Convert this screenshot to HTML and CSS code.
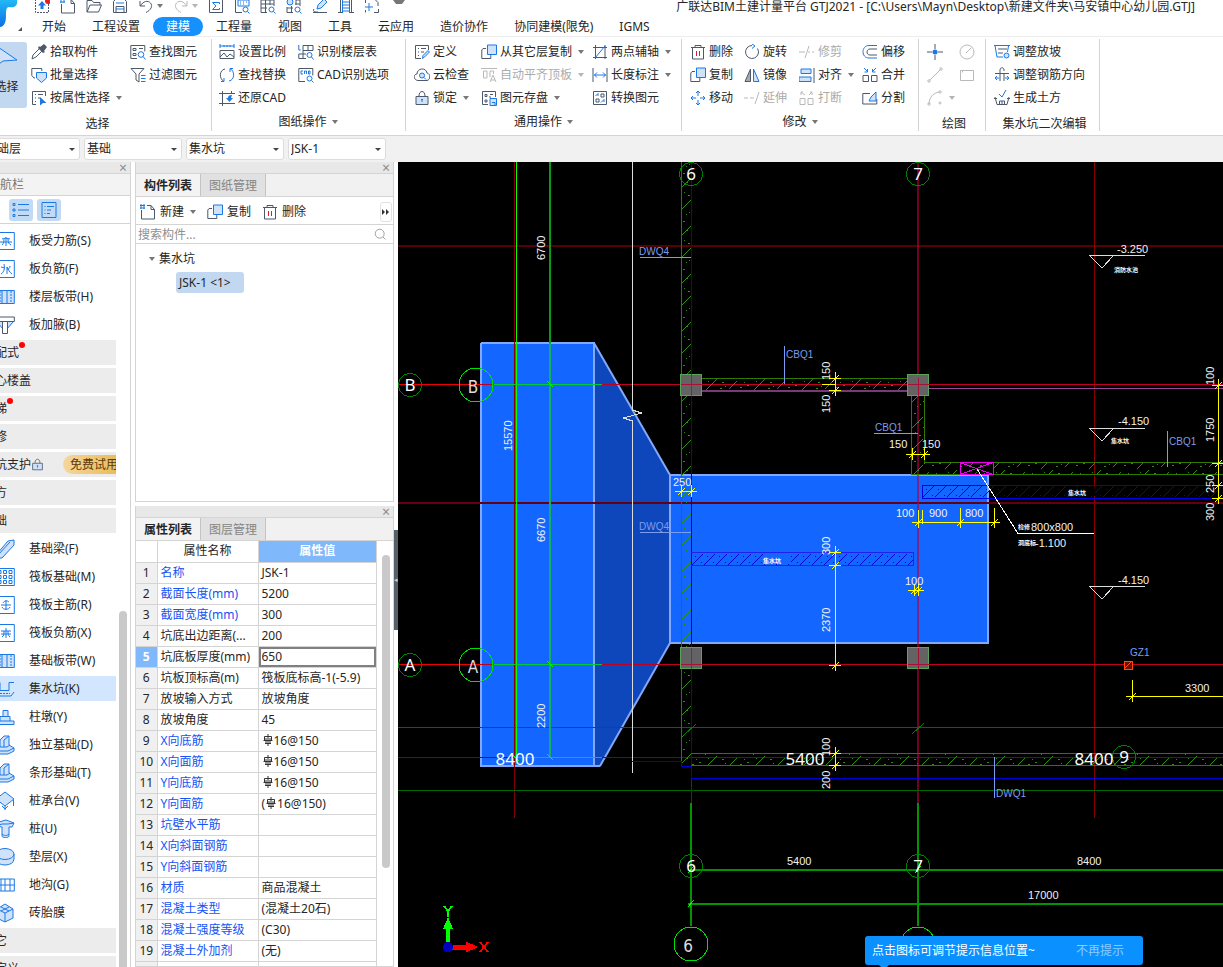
FILE: index.html
```html
<!DOCTYPE html>
<html lang="zh-CN">
<head>
  <meta charset="utf-8">
  <title>广联达BIM土建计量平台 GTJ2021</title>
  <link rel="stylesheet" href="styles.css">
</head>
<body>
  <!-- Icon sprite -->
  <svg class="sprite" aria-hidden="true">
    <symbol id="i-upload" viewBox="0 0 16 16"><path class="k dash" d="M1.500 1v13.500h13V1"/><path class="bf" d="M8 3l4 4.500H9.500V11h-3V7.500H4z"/><circle cx="14" cy="3" r="3" fill="#e81e25"/></symbol>
    <symbol id="i-new" viewBox="0 0 16 16"><path class="k" d="M1.500 6v9h13V5.500l-3.500-4H7M11 1.500v4h3.500"/><path class="b" d="M0 1.500h5M0 4h5M1 0v5M4 0v5"/></symbol>
    <symbol id="i-open" viewBox="0 0 16 16"><path class="k" d="M1 14V2.500h5l1.500 2H14V7M1 14l3-7h11.500l-3 7z"/></symbol>
    <symbol id="i-save" viewBox="0 0 16 16"><path class="k" d="M1.500 3.500l2-2h9l2 2v11h-13zM4 14V8.500h8V14"/><path class="b" d="M4 5h8M4 11h8"/></symbol>
    <symbol id="i-undo" viewBox="0 0 16 16"><path class="k" d="M2 3v5h5M2.500 8C5 3 10 2 12.500 5s.5 7-4.500 9.500"/></symbol>
    <symbol id="i-redo" viewBox="0 0 16 16"><path class="k" d="M14 3v5H9M13.500 8C11 3 6 2 3.500 5s-.5 7 4.500 9.500"/></symbol>
    <symbol id="i-sum" viewBox="0 0 16 16"><path class="k" d="M1.500 1.500h13v13h-13z"/><path class="b" d="M11.500 6V4.500h-7L8 8l-3.500 3.500h7V10"/></symbol>
    <symbol id="i-ruler" viewBox="0 0 16 16"><path class="k" d="M1.500 2v12.500H8"/><path class="b" d="M4 2h11v6H4zM6 4h1M9 4h1M12 4h1M6 6h1M9 6h1"/><circle class="b" cx="11.500" cy="11.500" r="2.500"/><path class="b" d="M13.500 13.500l2 2"/></symbol>
    <symbol id="i-gridfind" viewBox="0 0 16 16"><path class="k" d="M1 2h13v6M1 2v12.500h6M1 6h13M1 10h6M5.500 2v12.500M10 2v5"/><circle class="b" cx="11.500" cy="11.500" r="2.500"/><path class="b" d="M13.500 13.500l2 2"/></symbol>
    <symbol id="i-eyefind" viewBox="0 0 16 16"><path class="k" d="M10 2h4v6M1 9v5.500h6M9 6h5M1 10h6M5.500 8v6.500M10 2v5"/><circle class="b f" cx="4" cy="4" r="3"/><circle class="b" cx="11.500" cy="11.500" r="2.500"/><path class="b" d="M13.500 13.500l2 2"/></symbol>
    <symbol id="i-pen" viewBox="0 0 16 16"><path class="k" d="M1 14.500h14M2 11c-2 3 2 3 4 3"/><path class="b f" d="M5 11l1-4 6-6 3 3-6 6z"/></symbol>
    <symbol id="i-film" viewBox="0 0 16 16"><path class="k" d="M2.500 1v14M13.500 1v14M0 14.500h5M11 14.500h5"/><path class="b" d="M4.500 4h7M4.500 7h7M4.500 10h7M4.500 13h7M4.500 1v14M11.500 1v14"/></symbol>
    <symbol id="i-frame" viewBox="0 0 16 16"><path class="k" d="M5 1.500h6l3 3V8M1.500 5V1.500M1.500 14.500V12M10 14.500h4.500V11"/><path class="b" d="M1 9h8M5 5v8"/></symbol>

    <symbol id="i-cursor" viewBox="0 0 28 28"><path class="b f" d="M2 1v22l8-6 14-1z"/></symbol>
    <symbol id="i-dropper" viewBox="0 0 16 16"><path d="M9 3l4-3 3 3-3 4 1 1-2 1-5-5 1-2z" fill="#4d586a"/><path class="k" d="M8 5L2 11l-1 4 4-2 6-6"/></symbol>
    <symbol id="i-batch" viewBox="0 0 16 16"><path class="k" d="M4 11H3L.8 8.500v-7h10V4"/><path class="b f" d="M5.500 5.500h10V11l-5 4.500-5-4.500z"/></symbol>
    <symbol id="i-attr" viewBox="0 0 16 16"><path class="k" d="M5 14.500H1.500v-13h13V6M4 4.500h1M4 8h1M4 11.500h1M7 4.500h5M7 8h2"/><path class="bf" d="M9 7l6.500 6H12l-3 2.500z"/></symbol>
    <symbol id="i-find" viewBox="0 0 16 16"><path class="k" d="M7 14.500H.8v-13h14v6M3 4.500h3v2H3zM3 9.500h3v2H3zM9 4.500h4"/><circle class="b" cx="11" cy="10.500" r="2.800"/><path class="b" d="M13 12.500l2.500 3"/></symbol>
    <symbol id="i-filter" viewBox="0 0 16 16"><path class="k" d="M1 1.500h13L9 7v8l-3-2V7z"/><path class="b" d="M11 8.500h4.500M11 11.500h4.500M11 14.500h4.500"/></symbol>
    <symbol id="i-scale" viewBox="0 0 16 16"><path class="b" d="M.8 2h14.500M1 0v4M15 0v4M5 1v2M8 1v2M11 1v2"/><path class="k" d="M1 6.500h14v8H1zM1 13l4-4 3 4 3-3 4 3"/></symbol>
    <symbol id="i-replace" viewBox="0 0 16 16"><path class="k" d="M6 2C0 3 0 12 5 14.500"/><path class="b" d="M10 14c6-1 6-10 1-12.500M11 5V1.500h3M5 11v3.500H2"/></symbol>
    <symbol id="i-restore" viewBox="0 0 16 16"><path class="k" d="M0 3.500h16M0 13.500h16M3.500 1v15M12.500 1v3"/><path class="bf" d="M13 5c-3 0-4 1-4 3H7l3.500 4L14 8h-2z"/></symbol>
    <symbol id="i-floor" viewBox="0 0 16 16"><path class="b" d="M.8 1v5M.8 6h2"/><path class="k" d="M5 1.500h10v5H5zM10 1.500v5M5 6.500v8M.8 10H8M.8 14.500H8M.8 10v4.500"/><circle class="b" cx="11.500" cy="11" r="2.500"/><path class="b" d="M13.500 13l2 2.500"/></symbol>
    <symbol id="i-cad" viewBox="0 0 16 16"><path class="k" d="M7 14.500H.8v-13h14v7"/><path class="b" d="M5 4H3v3h2M6.500 7V4h2v3M10.500 4h1.500v3h-1.500z"/><circle class="b" cx="11.500" cy="11.500" r="2.500"/><path class="b" d="M13.500 13.500l2 2"/></symbol>

    <symbol id="i-define" viewBox="0 0 16 16"><path class="k" d="M7 14.500H1.500v-13h13V6M4 4.500h1M4 8h1M4 11.500h1M7 4.500h5M7 8h3"/><path class="b f" d="M8.500 14.500l.5-3 5-5 1.500 1.500-5 5z"/></symbol>
    <symbol id="i-cloud" viewBox="0 0 16 16"><path class="k" d="M4 13.500C-1 13-.5 7 3 7c0-6 9-7 10-1 4 1 3.500 7 0 7.500z"/><circle class="b f" cx="8" cy="8.500" r="2.500"/><path class="b" d="M10 10.500l2 2"/></symbol>
    <symbol id="i-lock" viewBox="0 0 16 16"><path class="k f" d="M2 6.500h12v8H2z"/><path class="k" d="M5 6C5 0 11 0 11 6"/><path class="b" d="M8 9v3M7 10l1-1 1 1"/></symbol>
    <symbol id="i-copy" viewBox="0 0 16 16"><path class="k" d="M5 4.500H2L.8 6v8.500h9V11"/><path class="b f" d="M6.500 1h9v9.500h-9z"/></symbol>
    <symbol id="i-align-top" viewBox="0 0 16 16"><path class="k" d="M0 1.500h16M2.500 4h3.500v7H2.500zM9 10V4h3.500v3M9 15l3-7 3 7M10 13h4"/></symbol>
    <symbol id="i-disk" viewBox="0 0 16 16"><path class="k" d="M7 14.500H1.500v-13h13V7M4 4.500h2v2H4zM4 10h2v2H4zM9 4.500h3M8 7h2"/><path class="b f" d="M9 8.500h6.500v7H9zM11 12.500h3v3"/></symbol>
    <symbol id="i-axis" viewBox="0 0 16 16"><path class="k" d="M1 3.500h14M1 13.500h14M3.500 1v14M13 1v14"/><path class="b" d="M3 14L13 2"/></symbol>
    <symbol id="i-length" viewBox="0 0 16 16"><path class="k" d="M1 1v14M15 1v14"/><path class="b" d="M2 8h12M5 5.500L2.500 8 5 10.500M11 5.500L13.500 8 11 10.500"/></symbol>
    <symbol id="i-convert" viewBox="0 0 16 16"><path class="k" d="M1.500 1.500h13v13h-13zM9 4h3v3H9zM4 9h3v3H4z"/><path class="b" d="M3.500 6L6 3.500M6 6V3.500M9 12.500L12 9.500M12 12V9.500"/></symbol>

    <symbol id="i-delete" viewBox="0 0 16 16"><path class="k" d="M1 3.500h14M5 3.500v-2h6v2M2.500 3.500v11.500h11V3.500"/><path d="M6.500 7v5M9.500 7v5" stroke="#d81e2c"/></symbol>
    <symbol id="i-rotate" viewBox="0 0 16 16"><path class="k" d="M8 1.500a6.500 6.500 0 1 0 5.500 3"/><path class="b" d="M8 0l3 2-3 2.500"/></symbol>
    <symbol id="i-mirror" viewBox="0 0 16 16"><path d="M6.500 2v12.500H1z" stroke="#4d586a" fill="#aaa"/><path class="b f" d="M9.500 2v12.500H15z"/></symbol>
    <symbol id="i-move" viewBox="0 0 16 16"><path class="b" d="M8 1v5M8 10v5M1 8h5M10 8h5M6 3l2-2 2 2M6 13l2 2 2-2M3 6L1 8l2 2M13 6l2 2-2 2"/></symbol>
    <symbol id="i-trim" viewBox="0 0 16 16"><path class="k" d="M0 8h6M9 8h2M13 8h2M10 2L6 14"/></symbol>
    <symbol id="i-extend" viewBox="0 0 16 16"><path class="k" d="M0 8h4M6 8h4M15 2l-4 12"/></symbol>
    <symbol id="i-align" viewBox="0 0 16 16"><path class="b f" d="M2 2h10v4.500H2zM0 10h12v4.500H0z"/><path class="k" d="M15 1v15"/></symbol>
    <symbol id="i-break" viewBox="0 0 16 16"><path class="k" d="M1 8.500h5v6H1zM9 8.500h5v6H9zM6 5L2 2M2 5V2h2M10 5l3-3M13 5V2h-2"/></symbol>
    <symbol id="i-offset" viewBox="0 0 16 16"><path class="b" d="M15 1.500H7c-8 0-8 12.500 0 12.500h8"/><path class="k" d="M15 5H8c-4 0-4 6 0 6h7"/></symbol>
    <symbol id="i-merge" viewBox="0 0 16 16"><path class="k" d="M1 8.500h5.500v6H1zM9.500 8.500H15v6H9.500z"/><path class="b" d="M2 1l3.500 3.500M5.500 2v3h-3M14 1l-3.500 3.500M10.500 2v3h3"/></symbol>
    <symbol id="i-split" viewBox="0 0 16 16"><path class="k" d="M8 3.500H.8v10.500h14V9"/><path class="b f" d="M7 11l2-4 5-5v9z"/></symbol>
    <symbol id="i-point" viewBox="0 0 16 16"><path class="k" d="M8 0v5M8 11v5M0 8h5M11 8h5"/><circle class="bf" cx="8" cy="8" r="2.500"/></symbol>
    <symbol id="i-circle" viewBox="0 0 16 16"><circle class="k" cx="8" cy="8" r="7"/><path class="k" d="M7 9l5-5"/></symbol>
    <symbol id="i-line" viewBox="0 0 16 16"><path class="k" d="M3 13L13 3"/><circle class="k" cx="2" cy="14" r="1.200"/><circle class="k" cx="14" cy="2" r="1.200"/></symbol>
    <symbol id="i-rect" viewBox="0 0 16 16"><path class="k" d="M1.500 3.500h13v10h-13zM1.500 3.500h2v2"/></symbol>
    <symbol id="i-arc" viewBox="0 0 16 16"><path class="k" d="M2 14C2 8 6 3 12 2"/><circle class="k" cx="2" cy="14" r="1.200"/><circle class="k" cx="13" cy="2" r="1.200"/><circle class="k" cx="13" cy="13" r="1"/></symbol>
    <symbol id="i-slope" viewBox="0 0 16 16"><path class="b" d="M0 1.500h16M1 1.500L3 13h6M14.500 2l-1 6"/><path class="k" d="M4 5h9M4 9h5"/><circle class="b f" cx="12.500" cy="11.500" r="2.500"/></symbol>
    <symbol id="i-rebar-dir" viewBox="0 0 16 16"><path class="k" d="M6 14V3c0-3 4-3 4 0v1M10 7v7M1 6.500h14"/><path class="b" d="M1 11h4M11 11h4M3 9l-2 2 2 2M13 9l2 2-2 2"/></symbol>
    <symbol id="i-earth" viewBox="0 0 16 16"><path class="k" d="M1 7l2 7.500h10L15 7M0 8.500h3M13 8.500h3M5.500 14v-3h5v3M8 11v3"/><path class="b" d="M5 4l3 3 4-7"/></symbol>
    <symbol id="i-search" viewBox="0 0 16 16"><circle cx="7" cy="7" r="5.500" stroke="#8c8c8c"/><path d="M11 11l3 3" stroke="#8c8c8c"/></symbol>

    <symbol id="i-list" viewBox="0 0 18 18"><path class="b" d="M6 3.500h11M6 9h11M6 14.500h11M1 2.500h2v2H1zM1 8h2v2H1zM1 13.500h2v2H1z"/></symbol>
    <symbol id="i-card" viewBox="0 0 18 18"><path class="b" d="M2 1.500h14v15H2zM4.500 5.500h1M7 5.500h7M4.500 9h1M7 9h4M4.500 12.500h1M7 12.500h3"/></symbol>

    <symbol id="n-bar1" viewBox="0 0 20 20"><path class="b" d="M.8 1.500h18.500v17H.8zM5 11h12M7 14c1-1 2-2 2-6M11 6v9M7 8c1-1 6-1 8 0M13 8c0 4 1 5 3 6"/></symbol>
    <symbol id="n-bar2" viewBox="0 0 20 20"><path class="b" d="M.8 1.500h18.500v17H.8zM6 15c3-2 4-5 3-10M6 8l4 1M12 15V8c1 2 3 6 5 7M12 10c2 0 3-1 3-3"/></symbol>
    <symbol id="n-strip" viewBox="0 0 20 20"><path class="b f" d="M.8 3.500h18.500v13H.8z"/><path class="b" d="M7 4v12M12 4v12"/><path class="b dash" d="M5 4v12M16 4v12"/></symbol>
    <symbol id="n-hunch" viewBox="0 0 20 20"><path class="b f" d="M2 7l6 7V7M18 7l-6 7V7"/><path class="k" d="M.8 2h18.500v4.500H.8z"/><path d="M7.500 7v11.500h5V7" fill="#fff" stroke="#4d586a"/></symbol>
    <symbol id="n-beam" viewBox="0 0 20 20"><path class="b f" d="M1 16L13 2l6-1v5L7 19H1z"/><path class="b" d="M4 15L15 3"/></symbol>
    <symbol id="n-raft" viewBox="0 0 20 20"><path class="b" d="M.8 1.500h18.500v17H.8zM3 3.500h3v3H3zM8.500 3.500h3v3h-3zM14 3.500h3v3h-3zM3 8.500h3v3H3zM8.500 8.500h3v3h-3zM14 8.500h3v3h-3zM3 13.500h3v3H3zM8.500 13.500h3v3h-3zM14 13.500h3v3h-3z"/></symbol>
    <symbol id="n-raftbar" viewBox="0 0 20 20"><path class="b" d="M.8 1.500h18.500v17H.8zM6 10h10M11 5v10M7 12c1 3 7 3 8 0M8 8c1-2 4-3 6-1"/></symbol>
    <symbol id="n-raftneg" viewBox="0 0 20 20"><path class="b" d="M.8 1.500h18.500v17H.8zM6 8h10M6 11h10M11 5v10M7 14c2-1 2-3 2-6M15 14c-2-2-2-3-2-6"/></symbol>
    <symbol id="n-pit" viewBox="0 0 20 20"><path class="b" d="M1 11.500h13V3.500h5M19 13l-3 4H1"/><path class="b dash" d="M2 14.500h13"/><path class="b" d="M1 3.500h4v8"/></symbol>
    <symbol id="n-pier" viewBox="0 0 20 20"><path class="b f" d="M1 14h18v3.500H1zM5 14V9.500h10V14M8 9.500v-6h5v6"/></symbol>
    <symbol id="n-iso" viewBox="0 0 20 20"><path class="b f" d="M1 13l4-1V5l4-4h5v9l5 3v3l-6 3H1z"/><path class="b" d="M1 16h12l6-3M9 5v7M5 12h7l3-2M9 5l5-4"/></symbol>
    <symbol id="n-cap" viewBox="0 0 20 20"><path class="b f" d="M1 8l9-7 9 7-9 7z"/><path class="b" d="M10 15v4M18.500 9v6M1.500 9v6M10 18l-3-3M10 18l3-3"/></symbol>
    <symbol id="n-pile" viewBox="0 0 20 20"><path class="b f" d="M1 7l3-4 7-2 8 3-2 4H14v9c0 2-7 2-7 0V8z"/><path class="b" d="M1 7l6-2 6 0 6-1M7 15c2 2 5 2 7 0"/></symbol>
    <symbol id="n-cushion" viewBox="0 0 20 20"><path class="b f" d="M1 7v5c0 8 18 8 18 0V7"/><ellipse class="b f" cx="10" cy="7" rx="9" ry="5.500"/></symbol>
    <symbol id="n-ditch" viewBox="0 0 20 20"><path class="b" d="M.8 4h18.500v12H.8zM.8 10h18.500M6 4v12M10 4v12M15 4v12"/></symbol>
    <symbol id="n-brick" viewBox="0 0 20 20"><path class="b f" d="M2 6l8-5 8 5v9l-8 4-8-4z"/><path class="b" d="M2 6l8 4 8-4M10 10v9M6 4l8 4M14 4L6 8"/></symbol>
    <symbol id="i-rebar" viewBox="0 0 12 12"><path d="M6 0v12M1.500 6.500h9M3 9.500h6M6 2.500H2.500v4M6 2.500h3.500v4M4 4v5M8 4v5" stroke="#333"/></symbol>
  </svg>

  <div class="app">
    <header class="top">
      <div class="logo">
        <svg viewBox="0 0 53 41">
          <defs><linearGradient id="lg" x1="0" y1="0" x2="0" y2="1"><stop offset="0" stop-color="#22b8f5"/><stop offset="1" stop-color="#0a6fe8"/></linearGradient></defs>
          <path d="M8 4h33c1 6-3 8-8 7-3 0-3 4-3 9 0 8-3 12-9 11-5-1-5-12-3-20H8z" fill="url(#lg)"/>
          <path d="M46 31v4h-4z" fill="#555"/>
        </svg>
      </div>
      <div class="top-rows">
        <div class="titlebar">
          <div class="quick">
            <button aria-label="上传"><svg class="ico"><use href="#i-upload"/></svg></button>
            <button aria-label="新建"><svg class="ico"><use href="#i-new"/></svg></button>
            <button aria-label="打开"><svg class="ico"><use href="#i-open"/></svg></button>
            <button aria-label="保存"><svg class="ico"><use href="#i-save"/></svg></button>
            <button aria-label="撤销"><svg class="ico"><use href="#i-undo"/></svg><i class="caret"></i></button>
            <button aria-label="恢复" class="off"><svg class="ico"><use href="#i-redo"/></svg><i class="caret"></i></button>
            <button aria-label="汇总计算"><svg class="ico"><use href="#i-sum"/></svg></button>
            <button aria-label="查看工程量"><svg class="ico"><use href="#i-ruler"/></svg></button>
            <button aria-label="查看计算式"><svg class="ico"><use href="#i-gridfind"/></svg></button>
            <button aria-label="查看三维"><svg class="ico"><use href="#i-eyefind"/></svg></button>
            <button aria-label="编辑"><svg class="ico"><use href="#i-pen"/></svg></button>
            <button aria-label="楼层"><svg class="ico"><use href="#i-film"/></svg></button>
            <button aria-label="全屏"><svg class="ico"><use href="#i-frame"/></svg></button>
            <button aria-label="更多"><i class="caret bar"></i></button>
          </div>
          <div class="title">广联达BIM土建计量平台 GTJ2021 - [C:\Users\Mayn\Desktop\新建文件夹\马安镇中心幼儿园.GTJ]</div>
        </div>
        <nav class="tabs">
          <button>开始</button><button>工程设置</button><button class="active">建模</button><button>工程量</button><button>视图</button><button>工具</button><button>云应用</button><button>造价协作</button><button>协同建模(限免)</button><button>IGMS</button>
        </nav>
      </div>
    </header>

    <div class="ribbon">
      <section class="group g-select">
        <div class="tools">
          <button class="big"><svg><use href="#i-cursor"/></svg>选择</button>
          <div class="cols">
            <button><svg class="ico"><use href="#i-dropper"/></svg>拾取构件</button>
            <button><svg class="ico"><use href="#i-find"/></svg>查找图元</button>
            <button><svg class="ico"><use href="#i-batch"/></svg>批量选择</button>
            <button><svg class="ico"><use href="#i-filter"/></svg>过滤图元</button>
            <button><svg class="ico"><use href="#i-attr"/></svg>按属性选择<i class="caret"></i></button>
          </div>
        </div>
        <div class="group-name plain">选择</div>
      </section>
      <section class="group g-paper">
        <div class="cols">
          <button><svg class="ico"><use href="#i-scale"/></svg>设置比例</button>
          <button><svg class="ico"><use href="#i-floor"/></svg>识别楼层表</button>
          <button><svg class="ico"><use href="#i-replace"/></svg>查找替换</button>
          <button><svg class="ico"><use href="#i-cad"/></svg>CAD识别选项</button>
          <button><svg class="ico"><use href="#i-restore"/></svg>还原CAD</button>
        </div>
        <div class="group-name">图纸操作<i class="caret"></i></div>
      </section>
      <section class="group g-common">
        <div class="cols">
          <button><svg class="ico"><use href="#i-define"/></svg>定义</button>
          <button><svg class="ico"><use href="#i-copy"/></svg>从其它层复制<i class="caret"></i></button>
          <button><svg class="ico"><use href="#i-axis"/></svg>两点辅轴<i class="caret"></i></button>
          <button><svg class="ico"><use href="#i-cloud"/></svg>云检查</button>
          <button class="off"><svg class="ico"><use href="#i-align-top"/></svg>自动平齐顶板<i class="caret"></i></button>
          <button><svg class="ico"><use href="#i-length"/></svg>长度标注<i class="caret"></i></button>
          <button><svg class="ico"><use href="#i-lock"/></svg>锁定<i class="caret"></i></button>
          <button><svg class="ico"><use href="#i-disk"/></svg>图元存盘<i class="caret"></i></button>
          <button><svg class="ico"><use href="#i-convert"/></svg>转换图元</button>
        </div>
        <div class="group-name">通用操作<i class="caret"></i></div>
      </section>
      <section class="group g-modify">
        <div class="cols">
          <button><svg class="ico"><use href="#i-delete"/></svg>删除</button>
          <button><svg class="ico"><use href="#i-rotate"/></svg>旋转</button>
          <button class="off"><svg class="ico"><use href="#i-trim"/></svg>修剪</button>
          <button><svg class="ico"><use href="#i-offset"/></svg>偏移</button>
          <button><svg class="ico"><use href="#i-copy"/></svg>复制</button>
          <button><svg class="ico"><use href="#i-mirror"/></svg>镜像</button>
          <button><svg class="ico"><use href="#i-align"/></svg>对齐<i class="caret"></i></button>
          <button><svg class="ico"><use href="#i-merge"/></svg>合并</button>
          <button><svg class="ico"><use href="#i-move"/></svg>移动</button>
          <button class="off"><svg class="ico"><use href="#i-extend"/></svg>延伸</button>
          <button class="off"><svg class="ico"><use href="#i-break"/></svg>打断</button>
          <button><svg class="ico"><use href="#i-split"/></svg>分割</button>
        </div>
        <div class="group-name">修改<i class="caret"></i></div>
      </section>
      <section class="group g-draw">
        <div class="cols">
          <button aria-label="点"><svg class="ico"><use href="#i-point"/></svg></button>
          <button aria-label="圆" class="off"><svg class="ico"><use href="#i-circle"/></svg></button>
          <button aria-label="直线" class="off"><svg class="ico"><use href="#i-line"/></svg></button>
          <button aria-label="矩形" class="off"><svg class="ico"><use href="#i-rect"/></svg></button>
          <button aria-label="弧线" class="off"><svg class="ico"><use href="#i-arc"/></svg><i class="caret"></i></button>
        </div>
        <div class="group-name plain">绘图</div>
      </section>
      <section class="group g-pit">
        <div class="cols">
          <button><svg class="ico"><use href="#i-slope"/></svg>调整放坡</button>
          <button><svg class="ico"><use href="#i-rebar-dir"/></svg>调整钢筋方向</button>
          <button><svg class="ico"><use href="#i-earth"/></svg>生成土方</button>
        </div>
        <div class="group-name plain">集水坑二次编辑</div>
      </section>
    </div>

    <div class="filters">
      <label class="filter"><select aria-label="楼层"><option>基础层</option></select></label>
      <label class="filter"><select aria-label="构件分类"><option>基础</option></select></label>
      <label class="filter"><select aria-label="构件类型"><option>集水坑</option></select></label>
      <label class="filter"><select aria-label="构件名称"><option>JSK-1</option></select></label>
    </div>

    <main class="work">
      <aside class="nav">
        <div class="grip"><button aria-label="关闭导航栏">×</button></div>
        <div class="nav-title">导航栏</div>
        <div class="nav-mode">
          <button aria-label="列表"><svg><use href="#i-list"/></svg></button>
          <button aria-label="卡片"><svg><use href="#i-card"/></svg></button>
        </div>
        <div class="nav-body">
          <ul class="nav-list">
            <li><svg><use href="#n-bar1"/></svg>板受力筋(S)</li>
            <li><svg><use href="#n-bar2"/></svg>板负筋(F)</li>
            <li><svg><use href="#n-strip"/></svg>楼层板带(H)</li>
            <li><svg><use href="#n-hunch"/></svg>板加腋(B)</li>
            <li class="cat"><span class="dot">装配式</span></li>
            <li class="cat">空心楼盖</li>
            <li class="cat"><span class="dot">楼梯</span></li>
            <li class="cat">装修</li>
            <li class="cat">基坑支护<svg class="mini"><use href="#i-lock"/></svg><span class="trial">免费试用</span></li>
            <li class="cat">土方</li>
            <li class="cat">基础</li>
            <li><svg><use href="#n-beam"/></svg>基础梁(F)</li>
            <li><svg><use href="#n-raft"/></svg>筏板基础(M)</li>
            <li><svg><use href="#n-raftbar"/></svg>筏板主筋(R)</li>
            <li><svg><use href="#n-raftneg"/></svg>筏板负筋(X)</li>
            <li><svg><use href="#n-strip"/></svg>基础板带(W)</li>
            <li class="current"><svg><use href="#n-pit"/></svg>集水坑(K)</li>
            <li><svg><use href="#n-pier"/></svg>柱墩(Y)</li>
            <li><svg><use href="#n-iso"/></svg>独立基础(D)</li>
            <li><svg><use href="#n-iso"/></svg>条形基础(T)</li>
            <li><svg><use href="#n-cap"/></svg>桩承台(V)</li>
            <li><svg><use href="#n-pile"/></svg>桩(U)</li>
            <li><svg><use href="#n-cushion"/></svg>垫层(X)</li>
            <li><svg><use href="#n-ditch"/></svg>地沟(G)</li>
            <li><svg><use href="#n-brick"/></svg>砖胎膜</li>
            <li class="cat">其它</li>
            <li class="cat">自定义</li>
          </ul>
          <div class="scroll"><div class="thumb"></div></div>
        </div>
      </aside>

      <div class="docks">
        <section class="dock members">
          <div class="grip"><button aria-label="关闭构件列表">×</button></div>
          <div class="dock-tabs"><button class="active">构件列表</button><button>图纸管理</button></div>
          <div class="dock-tools">
            <button><svg class="ico"><use href="#i-new"/></svg>新建<i class="caret"></i></button>
            <button><svg class="ico"><use href="#i-copy"/></svg>复制</button>
            <button><svg class="ico"><use href="#i-delete"/></svg>删除</button>
            <button class="more" aria-label="更多"><svg viewBox="0 0 8 6"><path d="M0 0l3 3-3 3zM4 0l3 3-3 3z" fill="#333"/></svg></button>
          </div>
          <div class="search"><input type="text" placeholder="搜索构件..." aria-label="搜索构件"><svg><use href="#i-search"/></svg></div>
          <div class="tree">
            <div class="tree-root"><i class="caret"></i>集水坑</div>
            <div class="tree-leaf">JSK-1 &lt;1&gt;</div>
          </div>
        </section>

        <section class="dock props">
          <div class="grip"><button aria-label="关闭属性列表">×</button></div>
          <div class="dock-tabs"><button class="active">属性列表</button><button>图层管理</button></div>
          <div class="prop-body">
            <table>
              <thead><tr><th class="no"></th><th class="name">属性名称</th><th class="value">属性值</th></tr></thead>
              <tbody>
                <tr><td>1</td><td class="link">名称</td><td>JSK-1</td></tr>
                <tr><td>2</td><td class="link">截面长度(mm)</td><td>5200</td></tr>
                <tr><td>3</td><td class="link">截面宽度(mm)</td><td>300</td></tr>
                <tr><td>4</td><td>坑底出边距离(...</td><td>200</td></tr>
                <tr class="editing"><td>5</td><td>坑底板厚度(mm)</td><td><input type="text" value="650" aria-label="坑底板厚度(mm)"></td></tr>
                <tr><td>6</td><td>坑板顶标高(m)</td><td>筏板底标高-1(-5.9)</td></tr>
                <tr><td>7</td><td>放坡输入方式</td><td>放坡角度</td></tr>
                <tr><td>8</td><td>放坡角度</td><td>45</td></tr>
                <tr><td>9</td><td class="link">X向底筋</td><td><svg class="bar"><use href="#i-rebar"/></svg>16@150</td></tr>
                <tr><td>10</td><td class="link">X向面筋</td><td><svg class="bar"><use href="#i-rebar"/></svg>16@150</td></tr>
                <tr><td>11</td><td class="link">Y向底筋</td><td><svg class="bar"><use href="#i-rebar"/></svg>16@150</td></tr>
                <tr><td>12</td><td class="link">Y向面筋</td><td>(<svg class="bar"><use href="#i-rebar"/></svg>16@150)</td></tr>
                <tr><td>13</td><td class="link">坑壁水平筋</td><td></td></tr>
                <tr><td>14</td><td class="link">X向斜面钢筋</td><td></td></tr>
                <tr><td>15</td><td class="link">Y向斜面钢筋</td><td></td></tr>
                <tr><td>16</td><td class="link">材质</td><td>商品混凝土</td></tr>
                <tr><td>17</td><td class="link">混凝土类型</td><td>(混凝土20石)</td></tr>
                <tr><td>18</td><td class="link">混凝土强度等级</td><td>(C30)</td></tr>
                <tr><td>19</td><td class="link">混凝土外加剂</td><td>(无)</td></tr>
                <tr><td></td><td></td><td></td></tr>
              </tbody>
            </table>
            <div class="scroll"><div class="thumb"></div></div>
          </div>
        </section>
      </div>

      <div class="splitter"><button aria-label="收起">◂</button></div>

      <div class="canvas">
        <svg class="plan" viewBox="398 162 825 805" preserveAspectRatio="xMinYMin slice">
          <defs>
            <pattern id="hv" width="11" height="48" patternUnits="userSpaceOnUse" x="681" y="170">
              <path d="M0 18L11 7M0 40L11 29" stroke="#2e9010" fill="none"/>
              <path d="M3 22.500h1M7 25.500h2M5 44.500h1M8 42.500h1M2 3.500h2M6 12.500h1" stroke="#2e9010"/>
            </pattern>
            <pattern id="hh" width="48" height="13" patternUnits="userSpaceOnUse" x="702" y="378">
              <path d="M3 13L15 1M27 11L35 3" stroke="#2e9010" fill="none"/>
              <path d="M20 4.500h2M23 8.500h1M18 10.500h2M38 9.500h2M42 4.500h1M45 7.500h2M6 3.500h1" stroke="#2e9010"/>
            </pattern>
            <pattern id="hb" width="12" height="14" patternUnits="userSpaceOnUse" x="691" y="552">
              <path d="M1 13L12 2M4 4.500h1M10 10.500h1" stroke="#0000e6" fill="none"/>
            </pattern>
            <pattern id="hb2" width="12" height="13" patternUnits="userSpaceOnUse" x="922" y="485">
              <path d="M1 12L12 1M4 4.500h1M10 10.500h1" stroke="#0000e6" fill="none"/>
            </pattern>
            <g id="tick" stroke="#ff0"><path d="M-6 .500H6M.500-6V6M-3 4L4-3"/></g>
            <path id="oct" d="M0-12L6-10 10-6 12 0 10 6 6 10 0 12-6 10-10 6-12 0-10-6-6-10z" fill="none" stroke="#008000"/>
            <path id="level" d="M0 .500H56M0 0L13 13 25 0" fill="none" stroke="#ddd"/>
          </defs>

          <!-- sump body -->
          <path d="M594 343L670 475V643L600 766H594z" fill="#0e47bb"/>
          <path d="M481 343h113v423H481z" fill="#1366ff"/>
          <path d="M670 475h318v168H670z" fill="#1366ff"/>
          <path class="soft" d="M594 343L670 475M670 643L600 766M481 343h113v423M481 343v423h119M670 475h318v168H670z" fill="none" stroke="#82a8fb" stroke-width="2"/>

          <!-- axis grid -->
          <g fill="none">
            <path d="M398 246H1223" stroke="#560006" stroke-width="2"/>
            <path d="M398 503H1223" stroke="#640010" stroke-width="2"/>
            <path d="M514.500 162V818M398 757.500H1223" stroke="#80000c"/>
            <path d="M1094.500 162V818" stroke="#8a0000"/>
            <path d="M918 162V803" stroke="#b8003c" stroke-opacity=".62" stroke-width="2"/>
            <path d="M398 384.500H1223M398 664.500H1223" stroke="#c00020"/>
            <path d="M398 384.500H481M398 664.500H481" stroke="#e00"/>
            <path d="M398 727.500H1223M398 790.500H1223" stroke="#006a00"/>
            <path d="M516.500 162V758" stroke="#0f0"/>
            <path d="M550 162V758" stroke="#0a9a1a" stroke-width="2"/>
            <path d="M550 343V758" stroke="#10b060" stroke-width="2"/>
            <path d="M494 384.500H602M494 664.500H602M514 757.500H602" stroke="#0c3"/>
            <path d="M547 381l6 6M547 661l6 6M547 754l6 6M513 755l6 6" stroke="#0f0"/>
            <path d="M632.500 162V410l9 3-18 5 9 3V773" stroke="#ddd"/>
          </g>

          <!-- walls -->
          <path d="M681 162h10v604h-10z" fill="url(#hv)"/>
          <path d="M681.500 162V766M681 766.500h10" stroke="#2e7a00" fill="none"/>
          <path d="M691.500 162V778.500H1223M632 761.500h49V766h10" stroke="#0000d8" fill="none"/>
          <path d="M702 378h206v13H702z" fill="url(#hh)"/>
          <path d="M702 378.500h206" stroke="#2e7a00"/>
          <path d="M691 391h217" stroke="#7a3878" stroke-width="2"/>
          <path d="M929 388.500h294" stroke="#9a4898"/>
          <path d="M912 396h12v79h-12z" fill="url(#hv)"/>
          <path d="M924 462h299v13H924z" fill="url(#hh)"/>
          <path d="M911.500 396v78.500H1223M924.500 396v66.500H1223" stroke="#2e7a00" fill="none"/>
          <path d="M691 753h532v13H691z" fill="url(#hh)"/>
          <path d="M691 753.500h532M691 765.500h532" stroke="#2e7a00"/>
          <path d="M691 552h223v14H691z" fill="url(#hb)"/>
          <path d="M764 554h27v10h-27z" fill="#1366ff"/>
          <path d="M691 552.500h222v13H691" stroke="#2020f0" fill="none"/>
          <path d="M922 485h301v13H922z" fill="url(#hb2)"/>
          <path d="M1068 487h27v9h-27z" fill="#000"/>
          <path d="M1223 485.500H922.500v12.500H1223" stroke="#0000e6" fill="none"/>
          <path d="M960 462.500h33v12h-33zM960 462.500l33 12M960 474.500l33-12" stroke="#e0e" fill="none"/>
          <path d="M977 469l41 64.500h76" stroke="#fff" fill="none"/>
          <path d="M684 735l12-11M912 734l12-11" stroke="#008000"/>

          <!-- columns -->
          <g fill="#636363" stroke="#58a458">
            <path d="M680.500 374.500h21v21h-21zM907.500 374.500h21v21h-21zM680.500 647.500h21v21h-21zM907.500 647.500h21v21h-21z"/>
          </g>
          <path d="M918.500 378v18M918.500 648v21M681 384.500h21M908 384.500h21M681 664.500h21M908 664.500h21" stroke="#a81038"/>
          <path d="M691.500 374v22M691.500 648v21" stroke="#4338a0"/>
          <path d="M1124 661h8v8h-8zM1125 668l6-6" fill="#6a1000" stroke="#ff4a10"/>

          <!-- lower axis dimensions -->
          <path d="M691 803V926M918 803V926M691 870H1223M688 904H1223" stroke="#009400" stroke-width="2"/>
          <path d="M688 907l6-7M688 873l6-7M915 873l6-7" stroke="#0f0"/>
          <path d="M691.500 779v24" stroke="#8a0020"/>

          <!-- yellow dimensions -->
          <g fill="none" stroke="#ff0">
            <path d="M835.500 374v21M835.500 552V665M835.500 753v16M681 491.500h11M912 454.500h14M918 522.500h76M918.500 510v14M922.500 510v14M960.500 508v16M994.500 508v16M914 590.500h5M1132 696.500h91M1132.500 680v18M1218.500 384v118M822 384.500h14"/>
            <use href="#tick" x="835" y="378"/><use href="#tick" x="835" y="390"/>
            <use href="#tick" x="835" y="552"/><use href="#tick" x="835" y="565"/><use href="#tick" x="835" y="665"/>
            <use href="#tick" x="835" y="753"/><use href="#tick" x="835" y="765"/>
            <use href="#tick" x="681" y="491"/><use href="#tick" x="691" y="491"/>
            <use href="#tick" x="912" y="454"/><use href="#tick" x="924" y="454"/>
            <use href="#tick" x="918" y="522"/><use href="#tick" x="960" y="522"/><use href="#tick" x="994" y="522"/>
            <use href="#tick" x="914" y="590"/><use href="#tick" x="918" y="590"/>
            <use href="#tick" x="1132" y="696"/>
            <use href="#tick" x="1218" y="385"/><use href="#tick" x="1218" y="463"/><use href="#tick" x="1218" y="485"/><use href="#tick" x="1218" y="498"/>
          </g>

          <!-- levels and wall tags -->
          <use href="#level" x="1089" y="255"/><use href="#level" x="1089" y="428"/><use href="#level" x="1089" y="586"/>
          <g fill="none" stroke="#7c9cf0">
            <path d="M640 257.500h51M640 532.500h51M784.500 346v38M874 433.500h44M1167.500 431v36M994.500 757v41"/>
          </g>
          <g class="tag">
            <text x="639" y="255">DWQ4</text><text x="639" y="530">DWQ4</text><text x="786" y="358">CBQ1</text>
            <text x="875" y="431">CBQ1</text><text x="1169" y="445">CBQ1</text><text x="996" y="797">DWQ1</text><text x="1130" y="656">GZ1</text>
          </g>
          <g class="dim">
            <text x="1117" y="253">-3.250</text><text x="1118" y="425">-4.150</text><text x="1118" y="584">-4.150</text>
            <text x="673" y="486">250</text><text x="889" y="448">150</text><text x="922" y="448">150</text>
            <text x="896" y="517">100</text><text x="929" y="517">900</text><text x="965" y="517">800</text>
            <text x="905" y="585">100</text><text x="1185" y="692">3300</text>
            <text x="1031" y="531">800x800</text><text x="1035" y="547">-1.100</text>
            <text x="787" y="865">5400</text><text x="1077" y="865">8400</text><text x="1028" y="899">17000</text>
            <text transform="translate(545 260) rotate(-90)">6700</text>
            <text transform="translate(512 451) rotate(-90)">15570</text>
            <text transform="translate(545 542) rotate(-90)">6670</text>
            <text transform="translate(545 728) rotate(-90)">2200</text>
            <text transform="translate(830 380) rotate(-90)">150</text>
            <text transform="translate(830 413) rotate(-90)">150</text>
            <text transform="translate(830 555) rotate(-90)">300</text>
            <text transform="translate(830 632) rotate(-90)">2370</text>
            <text transform="translate(830 756) rotate(-90)">100</text>
            <text transform="translate(830 789) rotate(-90)">200</text>
            <text transform="translate(1214 385) rotate(-90)">100</text>
            <text transform="translate(1214 442) rotate(-90)">1750</text>
            <text transform="translate(1214 493) rotate(-90)">250</text>
            <text transform="translate(1214 521) rotate(-90)">300</text>
          </g>
          <g class="note">
            <text x="1114" y="272">消防水池</text><text x="1111" y="443">集水坑</text><text x="763" y="563">集水坑</text>
            <text x="1068" y="495">集水坑</text><text x="1018" y="529">检修</text><text x="1018" y="545">洞底标</text>
          </g>

          <!-- axis bubbles -->
          <use href="#oct" x="410" y="385"/><use href="#oct" x="410" y="665"/>
          <use href="#oct" x="691" y="174"/><use href="#oct" x="918" y="174"/>
          <use href="#oct" x="691" y="866"/><use href="#oct" x="918" y="866"/><use href="#oct" x="1124" y="757"/>
          <g fill="none" stroke="#00e000">
            <circle cx="476" cy="385" r="17"/><circle cx="476" cy="665" r="17"/>
            <circle cx="691" cy="944" r="17"/><circle cx="918" cy="944" r="17"/>
          </g>
          <g class="axis">
            <text x="410" y="391">B</text><text x="410" y="671">A</text><text x="691" y="180">6</text><text x="918" y="180">7</text>
            <text x="691" y="872">6</text><text x="918" y="872">7</text><text x="1124" y="763">9</text>
            <text x="515" y="765">8400</text><text x="805" y="765">5400</text><text x="1094" y="765">8400</text>
          </g>
          <g class="axis thin"><text x="473" y="393">B</text><text x="473" y="673">A</text><text x="688" y="952">6</text></g>

          <!-- coordinate gizmo -->
          <path d="M446 945V929h-3l5-12 5 12h-3v16z" fill="#0f0"/>
          <path d="M450 944.500h16v-3l12 5.500-12 5.500v-3h-16z" fill="red"/>
          <circle cx="448" cy="947" r="5" fill="#0000c0"/>
          <path d="M444 906l4 5 4-5M448 911v6" stroke="#0f0" fill="none" stroke-width="2"/>
          <path d="M480 942l8 10M488 942l-8 10" stroke="red" fill="none" stroke-width="2"/>
        </svg>
        <div class="hint"><span>点击图标可调节提示信息位置~</span><button>不再提示</button></div>
      </div>
    </main>
  </div>
</body>
</html>
```
FILE: styles.css
```css
* {
  box-sizing: border-box;
}

:root {
  --ink: #4d586a;
  --blue: #1a78e6;
  --tint: #cfe2fa;
  --line: #d4d4d4;
}

body {
  margin: 0;
  height: 100vh;
  overflow: hidden;
  background: #fff;
  color: #262626;
  font: 12px/16px "Noto Sans", "Noto Sans CJK SC", sans-serif;
}

button, input, select {
  font: inherit;
  color: inherit;
}

button {
  display: flex;
  align-items: center;
  padding: 0;
  border: 0;
  background: none;
  white-space: nowrap;
}

/* Icons */
.sprite {
  display: none;
}

svg {
  fill: none;
}

.ico {
  width: 16px;
  height: 16px;
  flex: none;
}

.k { stroke: var(--ink); }
.b { stroke: var(--blue); }
.f { fill: var(--tint); }
.bf { fill: var(--blue); }
.dash { stroke-dasharray: 2 1; }

.off {
  --ink: #b9b9b9;
  --blue: #b9b9b9;
  color: #ababab;
}

.caret {
  flex: none;
  border: 3px solid transparent;
  border-top: 4px solid #777;
  border-bottom: 0;
  margin-left: 5px;
}

.off .caret {
  border-top-color: #b5b5b5;
}

/* The window runs past the left and top edges of the screen */
.app {
  display: flex;
  flex-direction: column;
  width: calc(100% + 24px);
  height: calc(100vh + 4px);
  margin: -4px 0 0 -24px;
}

/* Title bar and tabs */
.top {
  display: flex;
  flex: none;
  border-bottom: 1px solid #ececec;
}

.logo {
  width: 53px;
  height: 40px;
}

.logo svg {
  width: 53px;
  height: 41px;
}

.top-rows {
  flex: 1;
}

.titlebar {
  display: flex;
  align-items: center;
  justify-content: space-between;
  height: 20px;
  padding: 0 28px 0 5px;
}

.quick {
  display: flex;
  gap: 10px;
}

.quick .caret {
  margin-left: 3px;
}

.quick .bar {
  box-shadow: 0 -7px 0 -5px #777;
}

.title {
  padding-top: 2px;
  line-height: 14px;
  white-space: nowrap;
}

.tabs {
  display: flex;
  align-items: flex-end;
  height: 20px;
}

.tabs button {
  height: 19px;
  padding: 1px 13px 0;
  border-radius: 10px;
}

.tabs .active {
  background: #1590ff;
  color: #fff;
}

/* Ribbon */
.ribbon {
  display: flex;
  flex: none;
  height: 99px;
  padding: 2px 0 4px;
  border-bottom: 1px solid var(--line);
}

.group {
  display: flex;
  flex-direction: column;
  border-right: 1px solid var(--line);
  padding: 1px 0 0 8px;
}

.tools {
  display: flex;
}

.cols {
  display: grid;
  grid-auto-rows: 23px;
}

.cols button {
  gap: 3px;
}

.cols .caret {
  margin-left: 3px;
}

.group-name {
  display: flex;
  justify-content: center;
  padding: 5px 8px 0 0;
}

.group-name .caret {
  margin-top: 6px;
}

.group-name.plain {
  padding: 7px 4px 0 0;
}

.big {
  flex-direction: column;
  gap: 7px;
  width: 51px;
  height: 66px;
  margin: 2px 4px 0 0;
  padding: 2px 0 0 10px;
  border-radius: 3px;
  background: #c2d8f1;
}

.big svg {
  width: 28px;
  height: 28px;
}

.g-select { width: 236px; padding-left: 0; }
.g-select .cols { grid-template-columns: 99px 80px; }
.g-select .plain { padding-left: 12px; }
.g-paper { width: 194px; padding-left: 7px; }
.g-paper .cols { grid-template-columns: 79px 100px; }
.g-common { width: 276px; }
.g-common .cols { grid-template-columns: 67px 111px 90px; }
.g-modify { width: 237px; }
.g-modify .cols { grid-template-columns: 54px 55px 63px 54px; }
.g-draw { width: 67px; }
.g-draw .cols { grid-template-columns: 32px 20px; }
.g-pit { width: 114px; }

/* Level / member filters */
.filters {
  display: flex;
  flex: none;
  gap: 4px;
  height: 26px;
  padding: 2px 6px;
  background: #f1f1f1;
}

.filter {
  position: relative;
  width: 98px;
}

.filter::after {
  content: "";
  position: absolute;
  right: 5px;
  top: 10px;
  border: 3px solid transparent;
  border-top-color: #444;
  border-bottom: 0;
}

.filter select {
  appearance: none;
  width: 98px;
  height: 22px;
  padding: 0 2px;
  border: 1px solid #dcdcdc;
  border-radius: 3px;
  background: #fff;
}

/* Work area */
.work {
  display: flex;
  flex: 1;
  min-height: 0;
}

.grip {
  display: flex;
  flex: none;
  align-items: center;
  justify-content: flex-end;
  height: 12px;
  padding-right: 3px;
  border-bottom: 1px solid var(--line);
  background: #e8e8e8;
}

.grip button {
  color: #8c8c8c;
  font-size: 14px;
  line-height: 10px;
}

.scroll {
  flex: none;
  width: 8px;
}

.thumb {
  border-radius: 4px;
  background: #c9c9c9;
}

/* Navigation tree */
.nav {
  display: flex;
  flex-direction: column;
  flex: none;
  width: 155px;
  margin-right: 4px;
  border-right: 1px solid var(--line);
}

.nav-title {
  height: 22px;
  padding: 3px 12px;
  border-bottom: 1px solid var(--line);
  background: #f3f3f3;
  color: #777;
}

.nav-mode {
  display: flex;
  gap: 4px;
  height: 28px;
  padding: 3px 0 0 33px;
  border-bottom: 1px solid var(--line);
}

.nav-mode button {
  justify-content: center;
  width: 24px;
  height: 22px;
  border-radius: 3px;
  background: #c2dbf5;
}

.nav-mode svg {
  width: 18px;
  height: 18px;
}

.nav-body {
  display: flex;
  flex: 1;
  justify-content: space-between;
  min-height: 0;
  padding-right: 3px;
  overflow: hidden;
}

.nav-body .thumb {
  height: 400px;
  margin-top: 387px;
}

.nav-list {
  width: 140px;
  margin: 0;
  padding: 4px 0 0;
  list-style: none;
}

.nav-list li {
  display: flex;
  align-items: center;
  gap: 14px;
  height: 25px;
  margin-bottom: 3px;
  padding-left: 19px;
  overflow: hidden;
  white-space: nowrap;
}

.nav-list svg {
  flex: none;
  width: 20px;
  height: 20px;
}

.nav-list .cat {
  gap: 0;
  padding-left: 7px;
  background: #ececec;
}

.nav-list .current {
  background: #d3e6ff;
}

.nav-list .mini {
  width: 13px;
  height: 13px;
}

.dot {
  position: relative;
}

.dot::after {
  content: "";
  position: absolute;
  right: -6px;
  top: -3px;
  width: 6px;
  height: 6px;
  border-radius: 50%;
  background: #f00;
}

.trial {
  flex: none;
  height: 19px;
  margin-left: 19px;
  padding: 2px 7px;
  border-radius: 10px;
  background: linear-gradient(90deg, #f5d69c, #e8b74f);
  color: #5c3a08;
}

/* Docked panels */
.docks {
  display: flex;
  flex-direction: column;
  flex: none;
  gap: 4px;
  width: 259px;
}

.dock {
  display: flex;
  flex-direction: column;
  border: solid var(--line);
  border-width: 0 1px 1px;
}

.members {
  flex: 0 0 340px;
}

.props {
  flex: 1;
  min-height: 0;
  overflow: hidden;
}

.dock-tabs {
  display: flex;
  flex: none;
  height: 23px;
  border-bottom: 1px solid var(--line);
  background: #f1f1f1;
}

.dock-tabs button {
  width: 65px;
  justify-content: center;
  padding-top: 2px;
  border-right: 1px solid #c4c4c4;
  background: #e1e1e1;
  color: #858585;
}

.dock-tabs .active {
  background: #f3f3f3;
  color: #262626;
  font-weight: bold;
}

.dock-tools {
  display: flex;
  align-items: center;
  gap: 11px;
  height: 28px;
  padding: 2px 1px 0 4px;
  border-bottom: 1px solid var(--line);
}

.dock-tools button {
  gap: 4px;
}

.dock-tools .caret {
  margin-left: 2px;
}

.dock-tools .more {
  justify-content: center;
  width: 12px;
  height: 20px;
  margin-left: auto;
  border: 1px solid #e2e2e2;
  border-radius: 3px;
}

.more svg {
  flex: none;
  width: 8px;
  height: 6px;
}

.search {
  display: flex;
  align-items: center;
  height: 19px;
  padding: 0 6px 0 2px;
  border-bottom: 1px solid var(--line);
}

.search input {
  flex: 1;
  min-width: 0;
  height: 18px;
  padding: 0;
  border: 0;
  outline: 0;
}

.search input::placeholder {
  color: #8f8f8f;
}

.search svg {
  width: 13px;
  height: 13px;
}

.tree {
  padding: 7px 13px;
}

.tree-root {
  display: flex;
  align-items: center;
  gap: 4px;
}

.tree-root .caret {
  margin-left: 0;
}

.tree-leaf {
  width: 68px;
  height: 21px;
  margin: 5px 0 0 27px;
  padding: 3px 3px;
  border-radius: 3px;
  background: #c2d8f1;
  white-space: nowrap;
}

/* Property table */
.prop-body {
  display: flex;
  justify-content: space-between;
  padding-right: 3px;
}

.prop-body .thumb {
  height: 313px;
  margin-top: 14px;
}

table {
  width: 241px;
  table-layout: fixed;
  border-collapse: collapse;
}

th, td {
  height: 21px;
  padding: 0 3px;
  border: solid var(--line);
  border-width: 0 1px 1px 0;
  text-align: left;
  white-space: nowrap;
  overflow: hidden;
}

th {
  text-align: center;
  font-weight: normal;
}

.no { width: 21px; }
.name { width: 101px; }

th.value {
  background: #7fb9fb;
  color: #fff;
  font-weight: bold;
}

td:first-child {
  padding: 0;
  background: #f0f0f0;
  text-align: center;
}

.editing td:first-child {
  background: #7fb9fb;
  color: #fff;
  font-weight: bold;
}

.link {
  color: #1453f5;
}

.editing td:last-child {
  padding: 0;
}

td input {
  display: block;
  width: 100%;
  height: 20px;
  padding: 0 1px;
  border: 2px solid #808080;
  outline: 0;
}

.bar {
  width: 12px;
  height: 12px;
  vertical-align: -1px;
}

/* Splitter */
.splitter {
  display: flex;
  flex: none;
  width: 4px;
  padding-top: 368px;
}

.splitter button {
  justify-content: center;
  width: 4px;
  height: 100px;
  background: #55606b;
  color: #ccc;
  font-size: 7px;
}

/* Drawing */
.canvas {
  position: relative;
  flex: 1;
  overflow: hidden;
  background: #000;
}

.plan {
  display: block;
  width: 100%;
  height: 100%;
  shape-rendering: crispEdges;
}

.plan .soft {
  shape-rendering: auto;
}

.plan text {
  font-family: "Liberation Sans", sans-serif;
  font-size: 11px;
}

.dim text {
  fill: #f2f2f2;
}

.tag text {
  fill: #7c9cf0;
  font-size: 10px;
}

.note text {
  fill: #fff;
  font: bold 6px "Noto Sans CJK SC", sans-serif;
}

.axis text {
  fill: #fff;
  font: 17px "Noto Sans", sans-serif;
  text-anchor: middle;
}

.thin text {
  fill: #ddd;
  font-family: "DejaVu Sans Condensed", sans-serif;
  font-weight: 200;
}

.hint {
  position: absolute;
  right: 80px;
  bottom: 2px;
  display: flex;
  justify-content: space-between;
  width: 278px;
  height: 29px;
  padding: 0 19px 0 7px;
  border-radius: 3px;
  background: #0a91ff;
  color: #fff;
  line-height: 29px;
}

.hint::after {
  content: "";
  position: absolute;
  left: 14px;
  top: 29px;
  border: 5px solid transparent;
  border-top-color: #0a91ff;
  border-bottom: 0;
}

.hint button {
  color: #8cccff;
}
```
